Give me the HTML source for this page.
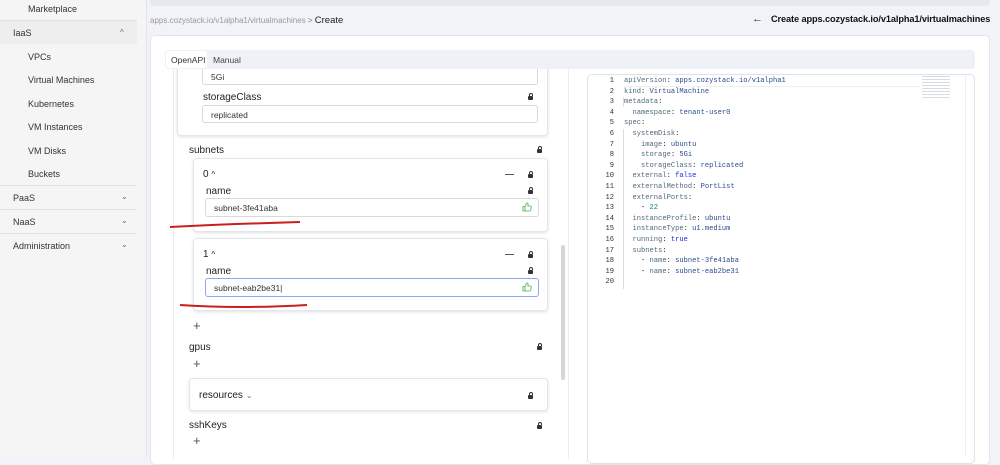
<!DOCTYPE html>
<html><head><style>
*{box-sizing:border-box;margin:0;padding:0}
body{width:1000px;height:456px;overflow:hidden;background:#f1f3f8;font-family:"Liberation Sans",sans-serif;position:relative;color:#222}
.a{position:absolute}
.side{left:0;top:0;width:147px;height:456px;background:#f5f5f5;border-right:1px solid #e4e4e4}
.si{position:absolute;font-size:9px;color:#333}
.lock{position:absolute;width:5px;height:4px;background:#333;border-radius:1px}
.lock:before{content:"";position:absolute;left:0.5px;top:-3px;width:2px;height:2px;border:1px solid #333;border-bottom:none;border-radius:2px 2px 0 0}
.lbl{position:absolute;font-size:10px;color:#222}
.inp{position:absolute;border:1px solid #d9d9d9;border-radius:3px;background:#fff;font-size:8.5px;color:#333;padding:4px 0 0 8px}
.card{position:absolute;background:#fff;border:1px solid #e3e6ec;border-radius:4px;box-shadow:0 1px 3px rgba(0,0,0,.12)}
.plus{position:absolute;font-size:13px;color:#555;font-weight:300}
.code{position:absolute;left:596px;top:76px;font-family:"Liberation Mono",monospace;font-size:7.1px;line-height:10.6px;white-space:pre}
.ln{color:#333;display:inline-block;width:18px;text-align:right;margin-right:10px}
.k{color:#4d6b7a}.v{color:#2a4b8d}.b{color:#1a2ee8}.n{color:#098658}
.chev{position:absolute;font-size:8px;color:#666}
.thumb{position:absolute}
</style></head><body>
<div class="a side"></div>
<div class="si" style="left:28px;top:4px">Marketplace</div>
<div class="a" style="left:0;top:20px;width:137px;height:1px;background:#e2e2e2"></div>
<div class="a" style="left:0;top:21px;width:137px;height:23px;background:#eeeeee"></div>
<div class="si" style="left:13px;top:28px">IaaS</div><div class="chev" style="left:120px;top:28px">^</div>
<div class="si" style="left:28px;top:52px">VPCs</div>
<div class="si" style="left:28px;top:75px">Virtual Machines</div>
<div class="si" style="left:28px;top:99px">Kubernetes</div>
<div class="si" style="left:28px;top:122px">VM Instances</div>
<div class="si" style="left:28px;top:146px">VM Disks</div>
<div class="si" style="left:28px;top:169px">Buckets</div>
<div class="a" style="left:0;top:185px;width:137px;height:1px;background:#e2e2e2"></div>
<div class="si" style="left:13px;top:193px">PaaS</div><div class="chev" style="left:121px;top:192px">⌄</div>
<div class="a" style="left:0;top:209px;width:137px;height:1px;background:#e2e2e2"></div>
<div class="si" style="left:13px;top:217px">NaaS</div><div class="chev" style="left:121px;top:216px">⌄</div>
<div class="a" style="left:0;top:233px;width:137px;height:1px;background:#e2e2e2"></div>
<div class="si" style="left:13px;top:241px">Administration</div><div class="chev" style="left:121px;top:240px">⌄</div>

<div class="a" style="left:150px;top:0;width:840px;height:6px;background:#e6e8ec;border-radius:0 0 4px 4px"></div>
<div class="a" style="left:150px;top:15px;font-size:8px;color:#999;white-space:nowrap">apps.cozystack.io/v1alpha1/virtualmachines <span style="color:#777">&gt;</span> <span style="color:#222;font-size:9.5px">Create</span></div>
<div class="a" style="left:752px;top:13px;font-size:11px;color:#333">←</div>
<div class="a" style="left:771px;top:14px;font-size:9.2px;font-weight:bold;color:#111;white-space:nowrap;letter-spacing:-0.1px">Create apps.cozystack.io/v1alpha1/virtualmachines</div>

<div class="a" style="left:150px;top:35px;width:840px;height:430px;background:#fff;border:1px solid #e3e6ec;border-radius:5px"></div>

<div class="a" style="left:173px;top:69px;width:1px;height:390px;background:#ececec"></div>
<div class="a" style="left:568px;top:69px;width:1px;height:390px;background:#ececec"></div>
<div class="a" style="left:561px;top:245px;width:4px;height:135px;background:#d6d6d6;border-radius:2px"></div>

<div class="card" style="left:177px;top:62px;width:371px;height:74px;border-top:none;border-radius:0 0 4px 4px"></div>
<div class="inp" style="left:202px;top:62px;width:336px;height:23px;padding-top:9px">5Gi</div>
<div class="lbl" style="left:203px;top:92px">storageClass</div><div class="lock" style="left:528px;top:96px"></div>
<div class="inp" style="left:202px;top:105px;width:336px;height:18px">replicated</div>

<div class="a" style="left:160px;top:40px;width:820px;height:29px;background:#fff;z-index:2"></div>
<div class="a" style="left:165px;top:50px;width:810px;height:19px;background:#eef1f6;border-radius:4px;z-index:3"></div>
<div class="a" style="left:166px;top:51px;width:41px;height:17px;background:#fff;border-radius:3px;z-index:3"></div>
<div class="a" style="left:171px;top:55px;font-size:8.5px;color:#333;z-index:4">OpenAPI</div>
<div class="a" style="left:213px;top:55px;font-size:8.5px;color:#444;z-index:4">Manual</div>

<div class="lbl" style="left:189px;top:145px">subnets</div><div class="lock" style="left:537px;top:149px"></div>
<div class="card" style="left:193px;top:158px;width:355px;height:74px"></div>
<div class="lbl" style="left:203px;top:169px">0 <span style="font-size:8px">^</span></div>
<div class="a" style="left:505px;top:174px;width:9px;height:1px;background:#555"></div><div class="lock" style="left:528px;top:174px"></div>
<div class="lbl" style="left:206px;top:186px">name</div><div class="lock" style="left:528px;top:190px"></div>
<div class="inp" style="left:205px;top:198px;width:334px;height:19px">subnet-3fe41aba</div>
<svg class="thumb" style="left:522px;top:202px" width="10" height="10" viewBox="0 0 10 10"><path d="M1 4.5h2v4.5H1zM3 4.5L5 1c1 0 1.3.7 1.1 1.6L5.8 4h2.6c.6 0 1 .5.9 1.1L8.7 8.3c-.1.5-.5.7-1 .7H3" fill="none" stroke="#4caf50" stroke-width=".8"/></svg>

<div class="card" style="left:193px;top:238px;width:355px;height:73px"></div>
<div class="lbl" style="left:203px;top:249px">1 <span style="font-size:8px">^</span></div>
<div class="a" style="left:505px;top:254px;width:9px;height:1px;background:#555"></div><div class="lock" style="left:528px;top:254px"></div>
<div class="lbl" style="left:206px;top:266px">name</div><div class="lock" style="left:528px;top:270px"></div>
<div class="inp" style="left:205px;top:278px;width:334px;height:19px;border-color:#8fa8f0">subnet-eab2be31|</div>
<svg class="thumb" style="left:522px;top:282px" width="10" height="10" viewBox="0 0 10 10"><path d="M1 4.5h2v4.5H1zM3 4.5L5 1c1 0 1.3.7 1.1 1.6L5.8 4h2.6c.6 0 1 .5.9 1.1L8.7 8.3c-.1.5-.5.7-1 .7H3" fill="none" stroke="#4caf50" stroke-width=".8"/></svg>

<div class="plus" style="left:193px;top:318px">+</div>
<div class="lbl" style="left:189px;top:342px">gpus</div><div class="lock" style="left:537px;top:346px"></div>
<div class="plus" style="left:193px;top:356px">+</div>
<div class="card" style="left:189px;top:378px;width:359px;height:33px"></div>
<div class="lbl" style="left:199px;top:390px">resources <span style="font-size:8px;color:#666">⌄</span></div><div class="lock" style="left:528px;top:395px"></div>
<div class="lbl" style="left:189px;top:420px">sshKeys</div><div class="lock" style="left:537px;top:425px"></div>
<div class="plus" style="left:193px;top:433px">+</div>

<svg class="a" style="left:0;top:0" width="1000" height="456"><path d="M170 227 Q230 224 300 222" stroke="#c8201a" stroke-width="2" fill="none"/><path d="M180 305 Q240 309 307 305" stroke="#c8201a" stroke-width="2" fill="none"/></svg>

<div class="a" style="left:587px;top:74px;width:388px;height:390px;border:1px solid #dde1e8;border-radius:5px;background:#fff"></div>
<div class="a" style="left:624px;top:76px;width:296px;height:11px;border-bottom:1px solid #eee"></div>
<div class="a" style="left:623px;top:97px;width:1px;height:10px;background:#ddd"></div>
<div class="a" style="left:623px;top:129px;width:1px;height:160px;background:#ddd"></div>
<div class="a" style="left:965px;top:76px;width:1px;height:380px;background:#eee"></div>
<div class="a" style="left:922px;top:76px;width:28px;height:22px;background:repeating-linear-gradient(#c9d3dd 0 1px,transparent 1px 3px);opacity:.8"></div>
<div class="code"><span class="ln">1</span><span class="k">apiVersion</span>: <span class="v">apps.cozystack.io/v1alpha1</span>
<span class="ln">2</span><span class="k">kind</span>: <span class="v">VirtualMachine</span>
<span class="ln">3</span><span class="k">metadata</span>:
<span class="ln">4</span>  <span class="k">namespace</span>: <span class="v">tenant-user0</span>
<span class="ln">5</span><span class="k">spec</span>:
<span class="ln">6</span>  <span class="k">systemDisk</span>:
<span class="ln">7</span>    <span class="k">image</span>: <span class="v">ubuntu</span>
<span class="ln">8</span>    <span class="k">storage</span>: <span class="v">5Gi</span>
<span class="ln">9</span>    <span class="k">storageClass</span>: <span class="v">replicated</span>
<span class="ln">10</span>  <span class="k">external</span>: <span class="b">false</span>
<span class="ln">11</span>  <span class="k">externalMethod</span>: <span class="v">PortList</span>
<span class="ln">12</span>  <span class="k">externalPorts</span>:
<span class="ln">13</span>    - <span class="n">22</span>
<span class="ln">14</span>  <span class="k">instanceProfile</span>: <span class="v">ubuntu</span>
<span class="ln">15</span>  <span class="k">instanceType</span>: <span class="v">u1.medium</span>
<span class="ln">16</span>  <span class="k">running</span>: <span class="b">true</span>
<span class="ln">17</span>  <span class="k">subnets</span>:
<span class="ln">18</span>    - <span class="k">name</span>: <span class="v">subnet-3fe41aba</span>
<span class="ln">19</span>    - <span class="k">name</span>: <span class="v">subnet-eab2be31</span>
<span class="ln">20</span></div>
</body></html>
